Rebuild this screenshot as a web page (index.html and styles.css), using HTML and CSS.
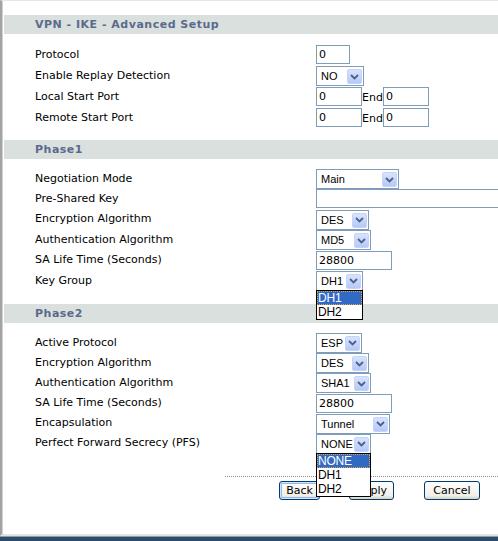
FILE: index.html
```html
<!DOCTYPE html>
<html lang="en">
<head>
  <meta charset="UTF-8">
  <title>VPN - IKE - Advanced Setup</title>
  <link rel="stylesheet" href="styles.css">
</head>
<body>
  <div class="window">
    <div class="frame">

      <div class="section-title first">VPN - IKE - Advanced Setup</div>
      <div class="fields fields-main">
        <div class="label">Protocol</div>
        <div class="control"><input class="textbox w34" value="0"></div>

        <div class="label">Enable Replay Detection</div>
        <div class="control">
          <div class="combo w48"><span class="combo-value">NO</span><span class="combo-btn"><svg viewBox="0 0 9 6" width="9" height="6"><polyline points="1,1 4.5,4.5 8,1"/></svg></span></div>
        </div>

        <div class="label">Local Start Port</div>
        <div class="control">
          <input class="textbox w46" value="0"><span class="end">End</span><input class="textbox w46" value="0">
        </div>

        <div class="label">Remote Start Port</div>
        <div class="control">
          <input class="textbox w46" value="0"><span class="end">End</span><input class="textbox w46" value="0">
        </div>
      </div>

      <div class="section-title phase1">Phase1</div>
      <div class="fields fields-p1">
        <div class="label">Negotiation Mode</div>
        <div class="control">
          <div class="combo w83"><span class="combo-value">Main</span><span class="combo-btn"><svg viewBox="0 0 9 6" width="9" height="6"><polyline points="1,1 4.5,4.5 8,1"/></svg></span></div>
        </div>

        <div class="label">Pre-Shared Key</div>
        <div class="control"><input class="textbox w200" value=""></div>

        <div class="label">Encryption Algorithm</div>
        <div class="control">
          <div class="combo w53"><span class="combo-value">DES</span><span class="combo-btn"><svg viewBox="0 0 9 6" width="9" height="6"><polyline points="1,1 4.5,4.5 8,1"/></svg></span></div>
        </div>

        <div class="label">Authentication Algorithm</div>
        <div class="control">
          <div class="combo w55"><span class="combo-value">MD5</span><span class="combo-btn"><svg viewBox="0 0 9 6" width="9" height="6"><polyline points="1,1 4.5,4.5 8,1"/></svg></span></div>
        </div>

        <div class="label">SA Life Time (Seconds)</div>
        <div class="control"><input class="textbox w76" value="28800"></div>

        <div class="label">Key Group</div>
        <div class="control">
          <div class="combo w47"><span class="combo-value">DH1</span><span class="combo-btn"><svg viewBox="0 0 9 6" width="9" height="6"><polyline points="1,1 4.5,4.5 8,1"/></svg></span>
            <ul class="dropdown">
              <li class="selected">DH1</li>
              <li>DH2</li>
            </ul>
          </div>
        </div>
      </div>

      <div class="section-title phase2">Phase2</div>
      <div class="fields fields-p2">
        <div class="label">Active Protocol</div>
        <div class="control">
          <div class="combo w46"><span class="combo-value">ESP</span><span class="combo-btn"><svg viewBox="0 0 9 6" width="9" height="6"><polyline points="1,1 4.5,4.5 8,1"/></svg></span></div>
        </div>

        <div class="label">Encryption Algorithm</div>
        <div class="control">
          <div class="combo w53"><span class="combo-value">DES</span><span class="combo-btn"><svg viewBox="0 0 9 6" width="9" height="6"><polyline points="1,1 4.5,4.5 8,1"/></svg></span></div>
        </div>

        <div class="label">Authentication Algorithm</div>
        <div class="control">
          <div class="combo w55"><span class="combo-value">SHA1</span><span class="combo-btn"><svg viewBox="0 0 9 6" width="9" height="6"><polyline points="1,1 4.5,4.5 8,1"/></svg></span></div>
        </div>

        <div class="label">SA Life Time (Seconds)</div>
        <div class="control"><input class="textbox w76" value="28800"></div>

        <div class="label">Encapsulation</div>
        <div class="control">
          <div class="combo w74"><span class="combo-value">Tunnel</span><span class="combo-btn"><svg viewBox="0 0 9 6" width="9" height="6"><polyline points="1,1 4.5,4.5 8,1"/></svg></span></div>
        </div>

        <div class="label">Perfect Forward Secrecy (PFS)</div>
        <div class="control">
          <div class="combo w55"><span class="combo-value">NONE</span><span class="combo-btn"><svg viewBox="0 0 9 6" width="9" height="6"><polyline points="1,1 4.5,4.5 8,1"/></svg></span>
            <ul class="dropdown">
              <li class="selected">NONE</li>
              <li>DH1</li>
              <li>DH2</li>
            </ul>
          </div>
        </div>
      </div>

      <div class="divider"></div>

      <div class="actions">
        <button class="btn btn-back focused">Back</button>
        <button class="btn btn-apply">Apply</button>
        <button class="btn btn-cancel">Cancel</button>
      </div>

    </div>
    <div class="taskbar"></div>
  </div>
</body>
</html>
```

FILE: styles.css
```css
:root {
  --bar-bg: #d9e0de;
  --bar-text: #5b6a8c;
  --field-border: #7f9db9;
  --highlight: #316ac5;
}

html, body {
  margin: 0;
  padding: 0;
  background: #ffffff;
}

body {
  font-family: "DejaVu Sans", Verdana, sans-serif;
  font-size: 11px;
  color: #000;
}

.window {
  width: 498px;
  height: 541px;
  display: flex;
  flex-direction: column;
  overflow: hidden;
}

.frame {
  flex: 1;
  border-left: 2px solid #a3a3a3;
  border-top: 1px solid #e6e6e6;
  border-bottom: 2px solid #e2e2e2;
  box-shadow: inset 1px 0 0 #d2d2d2;
  padding-left: 2px;
  overflow: hidden;
}

.taskbar {
  height: 4px;
  background: #2d4a6b;
  border-top: 1px solid #8e9cae;
}

/* section header bars */
.section-title {
  height: 19px;
  line-height: 19px;
  padding-left: 31px;
  background: var(--bar-bg);
  color: var(--bar-text);
  font-weight: bold;
  letter-spacing: 0.5px;
}

.section-title.first { margin-top: 14px; }
.section-title.phase1 { margin-top: 12px; }
.section-title.phase2 { margin-top: 13.6px; }

/* label / control grid */
.fields {
  display: grid;
  grid-template-columns: 281px 1fr;
  padding-left: 31px;
  margin-top: 9px;
}

.fields-main {
  grid-auto-rows: 21px;
  margin-top: 10px;
}

.fields-p1 { grid-auto-rows: 20.4px; }
.fields-p2 { grid-auto-rows: 20.2px; }

.label {
  align-self: center;
  white-space: nowrap;
}

.control {
  display: flex;
  align-items: flex-start;
  margin-top: 1px;
  white-space: nowrap;
}

/* text inputs */
.textbox {
  box-sizing: border-box;
  height: 19px;
  margin: 0;
  padding: 0 0 0 2px;
  border: 1px solid var(--field-border);
  background: #fff;
  font-family: "DejaVu Sans", Verdana, sans-serif;
  font-size: 11px;
  color: #000;
  outline: none;
}

.end {
  line-height: 21px;
  padding: 0;
}

.w34 { width: 34px; }
.w46 { width: 46px; }
.w47 { width: 47px; }
.w48 { width: 48px; }
.w53 { width: 53px; }
.w55 { width: 55px; }
.w74 { width: 74px; }
.w76 { width: 76px; }
.w83 { width: 83px; }
.w200 { width: 200px; }

/* combo boxes */
.combo {
  position: relative;
  box-sizing: border-box;
  height: 20px;
  display: flex;
  align-items: stretch;
  padding: 2px 1px 1px 3px;
  border: 1px solid var(--field-border);
  background: #fff;
  font-family: "Liberation Sans", Arial, sans-serif;
  font-size: 11px;
}

.combo-value {
  flex: 1;
  line-height: 15px;
  padding-left: 1px;
}

.combo-btn {
  width: 15px;
  box-sizing: border-box;
  display: flex;
  align-items: center;
  justify-content: center;
  border: 1px solid #c3d3fd;
  border-radius: 2px;
  background: linear-gradient(to bottom, #d8e3fd, #b5c9f7);
}

.combo-btn svg {
  fill: none;
  stroke: #4d6185;
  stroke-width: 1.8;
}

/* open option lists */
.dropdown {
  position: absolute;
  top: 100%;
  left: -1px;
  right: -1px;
  margin: 0;
  padding: 0;
  list-style: none;
  background: #fff;
  border: 1px solid #000;
  z-index: 5;
}

.dropdown li {
  height: 14px;
  line-height: 14px;
  padding-left: 1px;
  font-size: 12px;
  letter-spacing: -0.2px;
}

.dropdown li.selected {
  background: var(--highlight);
  color: #fff;
  outline: 1px dotted #e6a23c;
  outline-offset: -1px;
}

/* footer */
.divider {
  margin: 22.8px 0 0 221px;
  border-top: 1px dotted #8c8c8c;
}

.actions {
  display: flex;
  margin: 4px 0 0 275px;
}

.btn {
  box-sizing: border-box;
  height: 19px;
  padding: 0;
  border: 1px solid #003c74;
  border-radius: 3px;
  background: linear-gradient(to bottom, #ffffff, #f1efe6 80%, #d8d2c2);
  font-family: "DejaVu Sans", Verdana, sans-serif;
  font-size: 11px;
  color: #000;
}

.btn.focused {
  box-shadow: inset 0 0 0 1px #cee7ff, inset 0 0 0 2px #98b8ea;
}

.btn-back { width: 41px; }
.btn-apply { width: 45px; margin-left: 29px; }
.btn-cancel { width: 56px; margin-left: 30px; }
```
